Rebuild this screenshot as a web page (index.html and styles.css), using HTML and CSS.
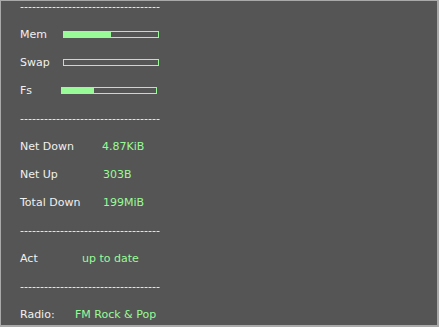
FILE: index.html
```html
<!DOCTYPE html>
<html>
<head>
<meta charset="utf-8">
<link rel="stylesheet" href="styles.css">
</head>
<body>
<div class="frame">
  <div class="stack">
    <div class="row"><span class="hr">-----------------------------------</span></div>
    <div class="row"><span class="label">Mem</span><span class="bar mem"><span class="fill" style="width:50%"></span></span></div>
    <div class="row"><span class="label">Swap</span><span class="bar mem"><span class="fill" style="width:0%"></span></span></div>
    <div class="row"><span class="label">Fs</span><span class="bar fs"><span class="fill" style="width:34%"></span></span></div>
    <div class="row"><span class="hr">-----------------------------------</span></div>
    <div class="row"><span class="label net">Net Down</span><span class="val">4.87KiB</span></div>
    <div class="row"><span class="label net">Net Up</span><span class="val v2">303B</span></div>
    <div class="row"><span class="label net">Total Down</span><span class="val v2">199MiB</span></div>
    <div class="row"><span class="hr">-----------------------------------</span></div>
    <div class="row"><span class="label act">Act</span><span class="val">up to date</span></div>
    <div class="row"><span class="hr">-----------------------------------</span></div>
    <div class="row"><span class="label radio">Radio:</span><span class="val">FM Rock &amp; Pop</span></div>
  </div>
</div>
</body>
</html>
```
FILE: styles.css
```css
html, body {
  margin: 0;
  padding: 0;
  background: #555555;
}
.frame {
  width: 439px;
  height: 327px;
  box-sizing: border-box;
  border-top: 1px solid #a9a9a9;
  border-left: 1px solid #a9a9a9;
  border-right: 2px solid #a9a9a9;
  border-bottom: 2px solid #a9a9a9;
  background: #555555;
  overflow: hidden;
  font-family: "DejaVu Sans", sans-serif;
  font-size: 11px;
  color: #f0f0f0;
}
.stack {
  display: flex;
  flex-direction: column;
  margin-top: -9px;
  padding-left: 19px;
}
.row {
  height: 28px;
  display: flex;
  align-items: center;
  white-space: nowrap;
}
.hr {
  letter-spacing: 0.03px;
}
.label {
  width: 43px;
}
.label.net { width: 82px; }
.label.act { width: 62px; }
.label.radio { width: 55px; }
.val { color: #98fb98; }
.val.v2 { margin-left: 1px; }
.bar {
  display: block;
  height: 7px;
  box-sizing: border-box;
  border: 1px solid #98fb98;
  position: relative;
}
.bar.mem { width: 96px; }
.bar.fs { width: 96px; margin-left: -2px; }
.fill {
  display: block;
  height: 100%;
  background: #98fb98;
}
```
